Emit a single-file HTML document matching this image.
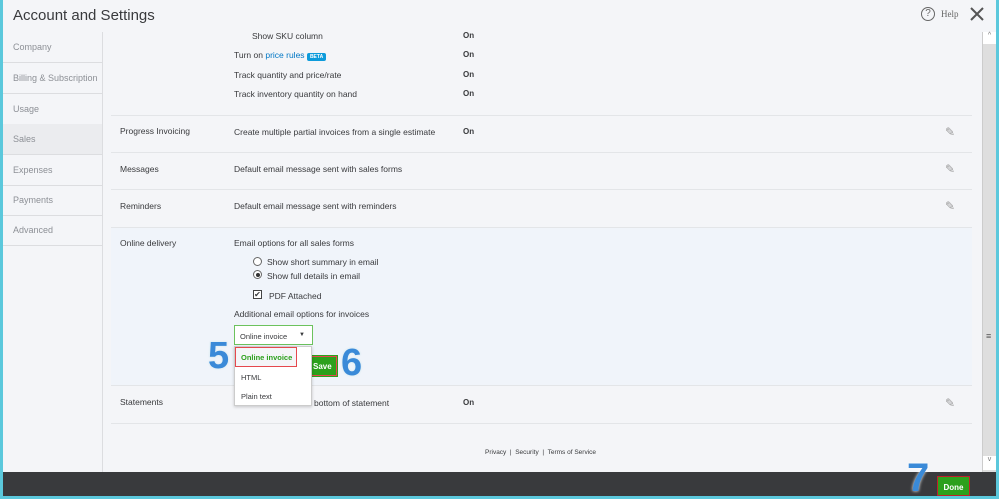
<!DOCTYPE html>
<html style="width:999px;height:499px;overflow:hidden"><head><style>
*{box-sizing:border-box;margin:0;padding:0}
body{width:999px;height:499px;overflow:hidden;background:#f4f5f8;font-family:"Liberation Sans",sans-serif;font-size:8.5px;color:#393a3d;position:relative}
.a{position:absolute}
.side div{position:absolute;left:3px;width:99px;height:31px;border-bottom:1px solid #dcdde0;color:#8d9096;padding:10px 0 0 10px;font-size:9px}
.hl{border-top:1px solid #e3e5e8}
.on{font-weight:bold;font-size:8px}
.pen{font-size:12px;color:#999}
</style></head><body>
<div class="a" style="left:0;top:0;width:3px;height:499px;background:#5bc8dc"></div>
<div class="a" style="right:0;top:0;width:3px;height:499px;background:#5bc8dc"></div>
<div class="a" style="left:13px;top:7px;font-size:15px;color:#393a3d">Account and Settings</div>
<div class="a" style="left:921px;top:7px;width:14px;height:14px;border:1.5px solid #666;border-radius:50%;font-size:10px;text-align:center;line-height:11px;color:#666">?</div>
<div class="a" style="left:941px;top:9px;font-family:'Liberation Serif',serif;font-size:9px;color:#666">Help</div>
<svg class="a" style="left:969px;top:6px" width="16" height="16"><path d="M2 2L14 14M14 2L2 14" stroke="#555" stroke-width="2"/></svg>
<div class="a" style="left:102px;top:32px;width:1px;height:440px;background:#dcdde0"></div>
<div class="side">
<div style="top:32px">Company</div><div style="top:63px">Billing &amp; Subscription</div><div style="top:94px">Usage</div>
<div style="top:124px;background:#ebecef">Sales</div><div style="top:155px">Expenses</div><div style="top:185px">Payments</div><div style="top:215px">Advanced</div>
</div>
<div class="a" style="left:252px;top:31px">Show SKU column</div>
<div class="a" style="left:234px;top:50px">Turn on <span style="color:#0077c5">price rules</span> <span style="background:#0d9bdb;color:#fff;font-size:5px;font-weight:bold;padding:1px 3px;border-radius:2px">BETA</span></div>
<div class="a" style="left:234px;top:70px">Track quantity and price/rate</div>
<div class="a" style="left:234px;top:89px">Track inventory quantity on hand</div>
<div class="a on" style="left:463px;top:31px">On</div><div class="a on" style="left:463px;top:50px">On</div><div class="a on" style="left:463px;top:70px">On</div><div class="a on" style="left:463px;top:89px">On</div>
<div class="a hl" style="left:111px;top:115px;width:861px"></div>
<div class="a" style="left:120px;top:126px">Progress Invoicing</div><div class="a" style="left:234px;top:127px">Create multiple partial invoices from a single estimate</div><div class="a on" style="left:463px;top:127px">On</div>
<div class="a hl" style="left:111px;top:152px;width:861px"></div>
<div class="a" style="left:120px;top:164px">Messages</div><div class="a" style="left:234px;top:164px">Default email message sent with sales forms</div>
<div class="a hl" style="left:111px;top:189px;width:861px"></div>
<div class="a" style="left:120px;top:201px">Reminders</div><div class="a" style="left:234px;top:201px">Default email message sent with reminders</div>
<div class="a" style="left:111px;top:227px;width:861px;height:159px;background:#f0f4fa;border-top:1px solid #e3e5e8;border-bottom:1px solid #e3e5e8"></div>
<div class="a" style="left:120px;top:238px">Online delivery</div>
<div class="a" style="left:234px;top:238px">Email options for all sales forms</div>
<div class="a" style="left:253px;top:257px;width:9px;height:9px;border:1px solid #666;border-radius:50%;background:#fff"></div>
<div class="a" style="left:267px;top:257px">Show short summary in email</div>
<div class="a" style="left:253px;top:270px;width:9px;height:9px;border:1px solid #666;border-radius:50%;background:#fff"><div style="margin:1.5px;width:4px;height:4px;border-radius:50%;background:#333"></div></div>
<div class="a" style="left:267px;top:271px">Show full details in email</div>
<div class="a" style="left:253px;top:290px;width:9px;height:9px;border:1px solid #444;background:#fff;font-size:8px;line-height:7px;text-align:center">✔</div>
<div class="a" style="left:269px;top:291px">PDF Attached</div>
<div class="a" style="left:234px;top:309px">Additional email options for invoices</div>
<div class="a" style="left:234px;top:325px;width:79px;height:20px;border:1px solid #6cc25d;background:#fff;padding:6px 0 0 5px;font-size:7.5px">Online invoice<span style="position:absolute;right:7px;top:6px;font-size:6px">▼</span></div>
<div class="a" style="left:305px;top:355px;width:33px;height:22px;background:#2ca01c"></div>
<div class="a" style="left:309px;top:356px;width:28px;height:20px;border:1px solid #e5484d;color:#fff;font-weight:bold;font-size:8px;padding:5px 0 0 3px">Save</div>
<div class="a" style="left:234px;top:346px;width:78px;height:60px;background:#fff;border:1px solid #ccc;box-shadow:0 1px 3px rgba(0,0,0,.2)"></div>
<div class="a" style="left:235px;top:347px;width:62px;height:20px;border:1px solid #e5484d;background:#f4f5f8;color:#2ca01c;font-weight:bold;font-size:7.5px;padding:5px 0 0 5px">Online invoice</div>
<div class="a" style="left:241px;top:373px;font-size:7.5px">HTML</div>
<div class="a" style="left:241px;top:392px;font-size:7.5px">Plain text</div>
<div class="a" style="left:208px;top:336px;font-size:38px;line-height:40px;font-weight:bold;color:#3a8ad8;text-shadow:0 0 3px #fff,0 0 2px #9cd">5</div>
<div class="a" style="left:341px;top:343px;font-size:38px;line-height:40px;font-weight:bold;color:#3a8ad8;text-shadow:0 0 3px #fff,0 0 2px #9cd">6</div>
<div class="a" style="left:120px;top:397px">Statements</div><div class="a" style="left:314px;top:398px">bottom of statement</div><div class="a on" style="left:463px;top:398px">On</div>
<div class="a hl" style="left:111px;top:423px;width:861px"></div>
<div class="a" style="left:485px;top:449px;font-size:6.5px">Privacy &nbsp;| &nbsp;Security &nbsp;| &nbsp;Terms of Service</div>
<div class="a pen" style="left:945px;top:125px">✎</div><div class="a pen" style="left:945px;top:162px">✎</div><div class="a pen" style="left:945px;top:199px">✎</div><div class="a pen" style="left:945px;top:396px">✎</div>
<div class="a" style="left:982px;top:32px;width:14px;height:440px;background:#dedede;border-left:1px solid #ccc"></div>
<div class="a" style="left:983px;top:32px;width:13px;height:12px;background:#fff;font-size:7px;text-align:center;color:#777">^</div>
<div class="a" style="left:983px;top:456px;width:13px;height:14px;background:#fff;font-size:7px;text-align:center;color:#777">v</div>
<div class="a" style="left:986px;top:331px;font-size:9px;color:#555">≡</div>
<div class="a" style="left:3px;top:472px;width:993px;height:24px;background:#393a3d"></div>
<div class="a" style="left:0;top:496px;width:999px;height:3px;background:#5bc8dc"></div>
<div class="a" style="left:937px;top:476px;width:33px;height:20px;background:#2ca01c;border:1px solid #c0202a;color:#fff;font-size:8px;font-weight:bold;text-align:center;padding-top:6px">Done</div>
<div class="a" style="left:907px;top:458px;font-size:40px;line-height:40px;font-weight:bold;color:#3a8ad8;text-shadow:0 0 3px #fff">7</div>
</body></html>
